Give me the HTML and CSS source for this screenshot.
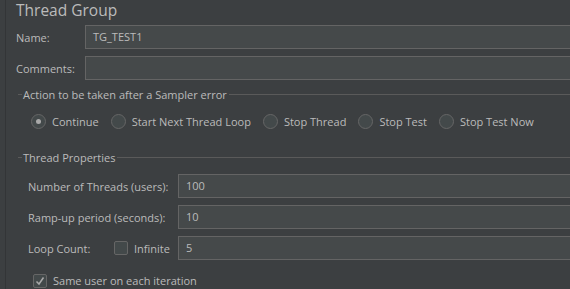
FILE: index.html
```html
<!DOCTYPE html>
<html lang="en">

<head>
    <meta charset="UTF-8">
    <meta name="viewport" content="width=device-width, initial-scale=1.0">
    <title>Thread Group</title>
    <link rel="stylesheet" href="styles.css">
</head>

<body>

    <div class="panel">
        <div class="title">Thread Group</div>

        <div class="form-row name-row">
            <label class="label">Name:</label>
            <div class="field">TG_TEST1</div>
        </div>
        <div class="form-row name-row">
            <label class="label">Comments:</label>
            <div class="field"></div>
        </div>

        <div class="legend legend-action">
            <span class="dash"></span>
            <span class="legend-text">Action to be taken after a Sampler error</span>
            <span class="rule"></span>
        </div>

        <div class="radios">
            <div class="radio-item"><span class="radio checked"></span>Continue</div>
            <div class="radio-item"><span class="radio"></span>Start Next Thread Loop</div>
            <div class="radio-item"><span class="radio"></span>Stop Thread</div>
            <div class="radio-item"><span class="radio"></span>Stop Test</div>
            <div class="radio-item"><span class="radio"></span>Stop Test Now</div>
        </div>

        <div class="legend legend-props">
            <span class="dash"></span>
            <span class="legend-text">Thread Properties</span>
            <span class="rule"></span>
        </div>

        <div class="props">
            <div class="form-row prop-row">
                <label class="label">Number of Threads (users):</label>
                <div class="field">100</div>
            </div>
            <div class="form-row prop-row">
                <label class="label">Ramp-up period (seconds):</label>
                <div class="field">10</div>
            </div>
            <div class="form-row prop-row">
                <div class="label loop-label">
                    <span class="loop-text">Loop Count:</span>
                    <span class="check-item"><span class="checkbox"></span>Infinite</span>
                </div>
                <div class="field">5</div>
            </div>
            <div class="same-user">
                <span class="checkbox">
                    <svg width="12" height="12" viewBox="0 0 12 12">
                        <path d="M2.5 6.5 L5 9 L9.5 2.5" fill="none" stroke="#a9a9a9" stroke-width="1.5" />
                    </svg>
                </span>
                Same user on each iteration
            </div>
        </div>
    </div>

</body>

</html>
```

FILE: styles.css
```css
body {
    margin: 0;
    padding: 0;
    background-color: #3c3f41;
    color: #bbbbbb;
    font-family: "Open Sans", "Noto Sans", sans-serif;
    font-size: 11px;
    overflow: hidden;
}

.panel {
    margin-left: 5px;
    border-left: 1px solid #333537;
    width: 620px;
    height: 289px;
    box-sizing: border-box;
    overflow: hidden;
}

.title {
    padding-left: 10px;
    padding-top: 1px;
    font-size: 15.5px;
    height: 24px;
    line-height: 18px;
    white-space: nowrap;
}

.form-row {
    display: flex;
    align-items: center;
    margin-bottom: 7px;
}

.label {
    flex: none;
    white-space: nowrap;
}

.name-row {
    padding-left: 10px;
}

.name-row .label {
    width: 69px;
}

.field {
    flex: 1;
    height: 22px;
    line-height: 22px;
    padding: 0 7px;
    background-color: #45494a;
    border: 1px solid #646464;
    border-right: none;
}

.legend {
    display: flex;
    align-items: center;
    height: 14px;
    white-space: nowrap;
}

.legend-action {
    margin-top: 6px;
}

.legend-props {
    margin-top: 21px;
}

.dash {
    margin-left: 12px;
    width: 4px;
    border-top: 1px solid #5a5a5a;
}

.legend-text {
    padding: 0 2px 0 1px;
}

.rule {
    flex: 1;
    border-top: 1px solid #5a5a5a;
}

.radios {
    display: flex;
    align-items: center;
    height: 15px;
    margin-top: 13px;
    padding-left: 25px;
    white-space: nowrap;
}

.radio-item {
    display: flex;
    align-items: center;
    margin-right: 12px;
}

.radio {
    width: 13px;
    height: 13px;
    border: 1px solid #666666;
    border-radius: 50%;
    background-color: #43494a;
    margin-right: 6px;
    position: relative;
}

.radio.checked::after {
    content: "";
    position: absolute;
    left: 4px;
    top: 4px;
    width: 5px;
    height: 5px;
    border-radius: 50%;
    background-color: #a9a9a9;
}

.props {
    margin-top: 10px;
    padding-left: 22px;
}

.prop-row .label {
    width: 150px;
}

.loop-label {
    display: flex;
    align-items: center;
}

.loop-text {
    width: 86px;
}

.check-item {
    display: flex;
    align-items: center;
}

.checkbox {
    width: 12px;
    height: 12px;
    border: 1px solid #666666;
    border-radius: 2px;
    background-color: #43494a;
    margin-right: 6px;
    display: inline-flex;
    align-items: center;
    justify-content: center;
}

.same-user {
    display: flex;
    align-items: center;
    margin-top: 13px;
    padding-left: 5px;
    white-space: nowrap;
}
```
